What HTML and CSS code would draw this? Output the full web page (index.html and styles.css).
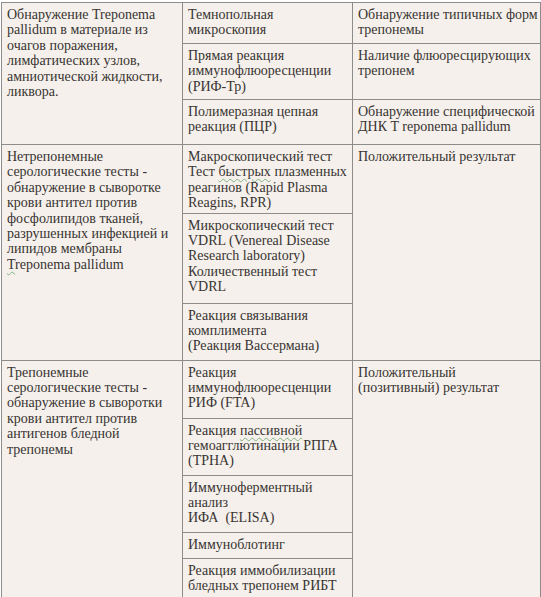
FILE: index.html
```html
<!DOCTYPE html>
<html>
<head>
<meta charset="utf-8">
<title>Методы диагностики сифилиса</title>
<link rel="stylesheet" href="styles.css">
</head>
<body>
<table class="grid">
  <colgroup>
    <col class="c1">
    <col class="c2">
    <col class="c3">
  </colgroup>
  <tr class="h41">
    <td rowspan="3">Обнаружение Treponema<br>pallidum в материале из<br>очагов поражения,<br>лимфатических узлов,<br>амниотической жидкости,<br>ликвора.</td>
    <td>Темнопольная<br>микроскопия</td>
    <td>Обнаружение типичных форм<br>трепонемы</td>
  </tr>
  <tr class="h56">
    <td>Прямая реакция<br>иммунофлюоресценции<br>(РИФ-Тр)</td>
    <td>Наличие флюоресцирующих<br>трепонем</td>
  </tr>
  <tr class="h45">
    <td>Полимеразная цепная<br>реакция (ПЦР)</td>
    <td>Обнаружение специфической<br>ДНК T reponema pallidum</td>
  </tr>

  <tr class="h68">
    <td rowspan="3">Нетрепонемные<br>серологические тесты -<br>обнаружение в сыворотке<br>крови антител против<br>фосфолипидов тканей,<br>разрушенных инфекцией и<br>липидов мембраны<br><span class="spell">T</span>reponema pallidum</td>
    <td>Макроскопический тест<br>Тест <span class="spell">быстрых</span> плазменных<br>реагинов (Rapid Plasma<br>Reagins, RPR)</td>
    <td rowspan="3">Положительный результат</td>
  </tr>
  <tr class="h90">
    <td>Микроскопический тест<br>VDRL (Venereal Disease<br>Research laboratory)<br>Количественный тест<br>VDRL</td>
  </tr>
  <tr class="h57">
    <td>Реакция связывания<br>комплимента<br>(Реакция Вассермана)</td>
  </tr>

  <tr class="h58">
    <td rowspan="5">Трепонемные<br>серологические тесты -<br>обнаружение в сыворотки<br>крови антител против<br>антигенов бледной<br>трепонемы</td>
    <td>Реакция<br>иммунофлюоресценции<br>РИФ (FTA)</td>
    <td rowspan="5">Положительный<br>(позитивный) результат</td>
  </tr>
  <tr class="h57">
    <td>Реакция <span class="spell">пассивной</span><br>гемоагглютинации РПГА<br>(TPHA)</td>
  </tr>
  <tr class="h57">
    <td>Иммуноферментный<br>анализ<br>ИФА&nbsp; (ELISA)</td>
  </tr>
  <tr class="h26">
    <td>Иммуноблотинг</td>
  </tr>
  <tr class="h44">
    <td>Реакция иммобилизации<br>бледных трепонем РИБТ</td>
  </tr>
</table>
</body>
</html>
```

FILE: styles.css
```css
html, body {
  margin: 0;
  padding: 0;
  background: #ffffff;
}

body {
  padding: 2px 0 0 1px;
  color: #383432;
  font-family: "Liberation Serif", serif;
}

.grid {
  border-collapse: collapse;
  table-layout: fixed;
  width: 539px;
  background: #f5f0eb;
  border: 1px solid #8e8c8a;
  font-family: "Liberation Serif", serif;
  font-size: 14px;
  line-height: 15.4px;
}

.c1 { width: 181px; }
.c2 { width: 170px; }
.c3 { width: 188px; }

.grid td {
  border: 1px solid #8e8c8a;
  vertical-align: top;
  padding: 4px 4px 2px 5px;
  white-space: nowrap;
  overflow: hidden;
}

.h41 { height: 41px; }
.h56 { height: 56px; }
.h45 { height: 45px; }
.h68 { height: 68px; }
.h90 { height: 90px; }
.h57 { height: 57px; }
.h58 { height: 58px; }
.h26 { height: 26px; }
.h44 { height: 44px; }

.spell {
  text-decoration: underline wavy #7fb37f;
  text-decoration-thickness: 1px;
  text-underline-offset: 2px;
}
```
